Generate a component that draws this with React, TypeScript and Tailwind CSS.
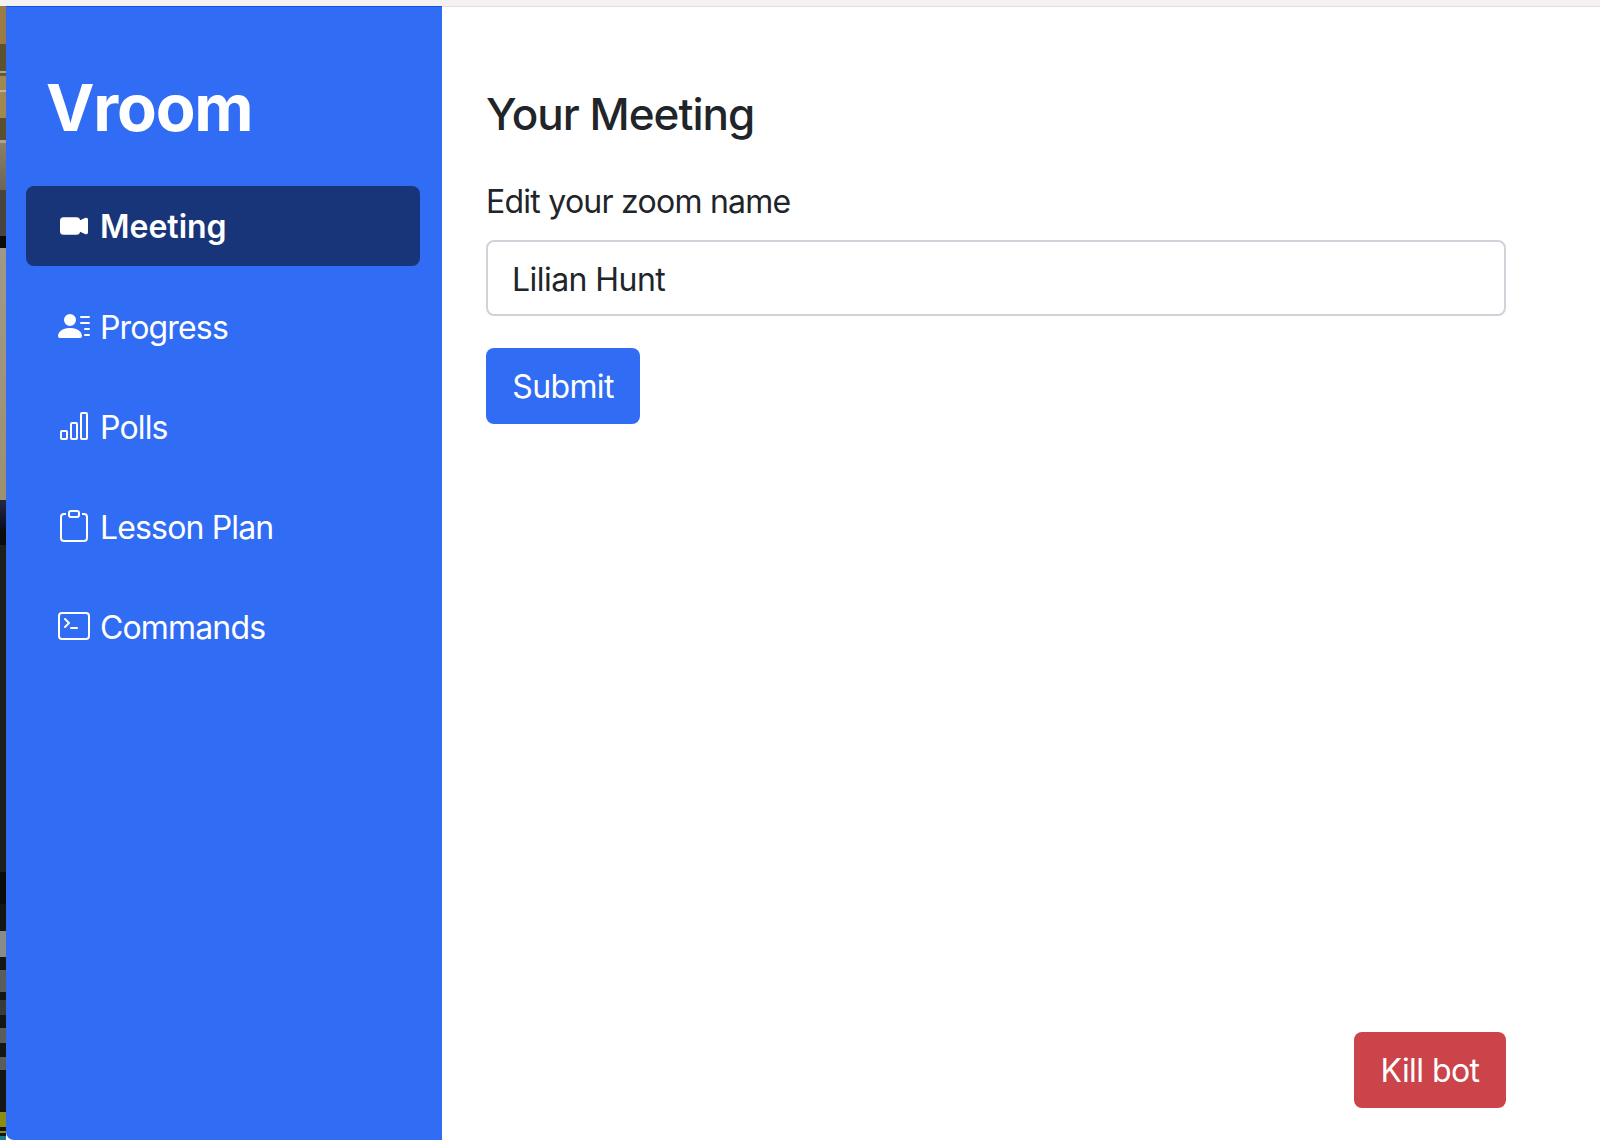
import { BsBarChart, BsCameraVideoFill, BsClipboard, BsPersonLinesFill, BsTerminal } from "react-icons/bs";

const navItems = [
  { label: "Meeting", icon: BsCameraVideoFill, active: true },
  { label: "Progress", icon: BsPersonLinesFill, active: false },
  { label: "Polls", icon: BsBarChart, active: false },
  { label: "Lesson Plan", icon: BsClipboard, active: false },
  { label: "Commands", icon: BsTerminal, active: false },
];

const App = () => {
  return (
    <div className="flex h-screen flex-col overflow-hidden bg-white font-['Inter',sans-serif] text-[#212529]">
      <div className="h-[6px] shrink-0 bg-[#f5f1f2]" />
      <div className="flex min-h-0 flex-1">
        {/* sliver of the desktop behind the window */}
        <div className="w-[6px] shrink-0 bg-[linear-gradient(to_bottom,#9a7a45_0,#9a7a45_38px,#5c5232_38px,#5c5232_65px,#a8a498_65px,#a8a498_67px,#5c5232_67px,#6a5c38_70px,#a08850_70px,#a08850_84px,#b8b4a8_84px,#b8b4a8_86px,#a08850_86px,#a08850_112px,#5a5030_112px,#5a5030_134px,#a8a498_134px,#a8a498_137px,#8a8068_137px,#6e6458_184px,#4a4440_184px,#4a4440_230px,#0c0c0c_230px,#0c0c0c_242px,#a09888_242px,#9c9070_494px,#232a40_494px,#0a0c1c_524px,#0c0c0c_524px,#0c0c0c_539px,#1e1e1e_539px,#1e1e1e_866px,#0c0c0c_866px,#0c0c0c_898px,#151515_898px,#151515_925px,#8a8a8a_925px,#8a8a8a_951px,#161616_951px,#161616_964px,#5c5c5c_964px,#5c5c5c_986px,#161616_986px,#161616_994px,#3a3a3a_994px,#3a3a3a_1009px,#161616_1009px,#161616_1022px,#5c5c5c_1022px,#5c5c5c_1037px,#161616_1037px,#161616_1051px,#5c5c5c_1051px,#5c5c5c_1064px,#161616_1064px,#161616_1106px,#8c8c14_1106px,#8c8c14_1121px,#161616_1121px,#161616_1125px,#8c8c14_1125px,#8c8c14_1127px,#161616_1127px,#161616_1130px,#1e7c8c_1130px,#1e7c8c_1134px)]" />
        <aside className="flex w-[436px] shrink-0 flex-col rounded-bl-[8px] border-t border-[#0f55e0] bg-[#316cf4] pr-[22px] pl-5 text-white">
          <h1 className="mt-[62px] pl-[20px] text-[65px] leading-[77px] font-bold tracking-[-1.2px]">Vroom</h1>
          <nav className="mt-[40px] flex flex-col gap-[20px]">
            {navItems.map((item) => (
              <a
                key={item.label}
                className={`flex h-[80px] items-center gap-[10px] rounded-[8px] pl-[32px] text-[32px] ${
                  item.active ? "bg-[#18357a] font-semibold" : "tracking-[-0.85px]"
                }`}
              >
                <span className="flex size-[32px] items-center justify-center">
                  <item.icon className={item.active ? "size-[28px]" : "size-[32px]"} />
                </span>
                <span className={item.active ? "pt-[2px]" : "pt-[3px]"}>{item.label}</span>
              </a>
            ))}
          </nav>
        </aside>
        <main className="flex min-w-0 flex-1 flex-col border-t border-[#e3dfe1] pr-[94px] pb-[32px] pl-[44px]">
          <h2 className="mt-[77px] text-[44px] leading-[60px] font-medium tracking-[-1px]">Your Meeting</h2>
          <label className="mt-[34px] text-[32px] leading-[48px] tracking-[-0.75px]">Edit your zoom name</label>
          <input
            readOnly
            value="Lilian Hunt"
            className="mt-[14px] h-[76px] w-full rounded-[8px] border-2 border-[#ced4da] bg-white px-6 pt-[2px] text-[32px] tracking-[-0.55px] outline-none"
          />
          <button className="mt-[32px] h-[76px] w-[154px] rounded-[8px] bg-[#316cf4] pt-[2px] text-[32px] tracking-[-0.65px] text-white">
            Submit
          </button>
          <button className="mt-auto h-[76px] w-[152px] self-end rounded-[8px] bg-[#cb444a] pt-[2px] text-[32px] tracking-[-0.55px] text-white">
            Kill bot
          </button>
        </main>
      </div>
    </div>
  );
};

export default App;
